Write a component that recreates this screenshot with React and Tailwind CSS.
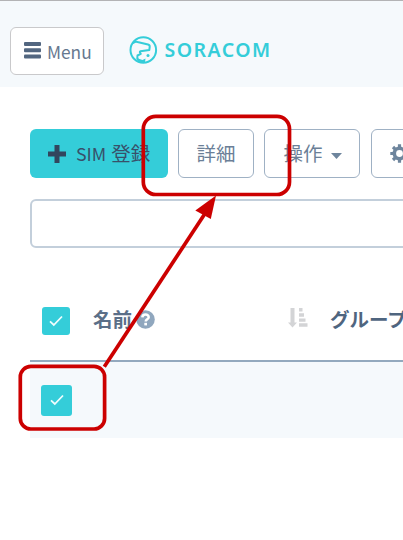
const Check = ({ className }) => (
  <span className={`flex shrink-0 items-center justify-center rounded-[3px] bg-[#34cdd9] ${className}`}>
    <svg width="14" height="12" viewBox="0 0 14 12" fill="none" stroke="#f0fcfd" strokeWidth="1.8">
      <path d="M1 6.4 4.8 10 13 1.5" />
    </svg>
  </span>
);

const Logo = () => (
  <svg className="shrink-0" width="144" height="30" viewBox="0 0 144 30" fill="#34cdd9">
    <g fill="none" stroke="#34cdd9" strokeWidth="2" strokeLinejoin="round">
      <circle cx="14.3" cy="15" r="12.8" />
      <path d="M4 8.500Q6 6 8.500 7L19 9.500Q21 10 20.700 12L20.300 15 11.500 16.300Q10 16.800 11.800 18.800L8.500 20.500 8.300 23.500 11 26.500" />
    </g>
    <path d="M9 23.500 13.500 25 16.500 23.500 16 27.500 11.500 27.500Z" />
    <circle cx="19" cy="20.5" r="1.5" />
    <text x="35.6" y="21.9" fontSize="19.5" fontWeight="600" textLength="105.5" lengthAdjust="spacing" fontFamily="'Noto Sans', sans-serif">SORACOM</text>
  </svg>
);

const Gear = () => (
  <svg width="19" height="19" viewBox="0 0 19 19" fill="none" stroke="#6e859d">
    <circle cx="9.5" cy="9.5" r="5.2" strokeWidth="3.6" />
    <path d="M9.5 0.3v3M9.5 15.7v3M.3 9.5h3M15.7 9.5h3M3 3l2.1 2.1M13.9 13.9 16 16M16 3l-2.1 2.1M5.1 13.9 3 16" strokeWidth="3.2" />
  </svg>
);

const Annotations = () => (
  <svg className="pointer-events-none absolute left-0 top-0" width="403" height="540" fill="none" stroke="#cc0000" strokeWidth="3.7">
    <rect x="143.3" y="116.3" width="146.2" height="78.2" rx="12.5" />
    <rect x="20.3" y="366.4" width="84.3" height="62.6" rx="10.5" />
    <path d="M104.3 366.8 206 212" />
    <path d="M216 195.5 195.3 210.5 210.8 219Z" fill="#cc0000" stroke="none" />
  </svg>
);

export default function App() {
  return (
    <div className="relative h-[540px] w-[403px] overflow-hidden bg-white font-['Noto_Sans_CJK_JP',sans-serif] text-[19.5px] leading-none text-[#6b7f97]">
      <header className="flex h-[87px] items-start border-t border-[#b3b3b5] bg-[#f5f9fc] pl-[10px] pt-[26px]">
        <button className="flex h-[48px] w-[94px] items-center rounded-[6px] border border-[#c9c9cb] bg-white pl-[12.5px] text-[17.3px] text-[#66788f]">
          <svg className="mb-[2px]" width="17" height="17" viewBox="0 0 17 17" fill="#526680">
            <rect width="17" height="4" rx="1" />
            <rect y="6.3" width="17" height="4" rx="1" />
            <rect y="12.6" width="17" height="4" rx="1" />
          </svg>
          <span className="ml-[6.5px] pt-[2px]">Menu</span>
        </button>
        <div className="ml-[25px] mt-[8px]"><Logo /></div>
      </header>

      <main className="pl-[30px] pt-[42px]">
        <div className="flex w-[450px] gap-[10px]">
          <button className="flex h-[49px] w-[138px] shrink-0 items-center rounded-[6px] bg-[#34cdd9] pl-[18px] text-[#38506a]">
            <svg width="18" height="18" viewBox="0 0 18 18" fill="#32465e">
              <path d="M6.5 0h5v6.5H18v5h-6.5V18h-5v-6.5H0v-5h6.5z" />
            </svg>
            <span className="mb-[2px] ml-[10px] flex items-baseline gap-[5px]"><span className="text-[17.8px]">SIM</span><span>登録</span></span>
          </button>
          <button className="h-[49px] w-[76px] shrink-0 rounded-[6px] border border-[#9fb1c4] bg-white pb-[2px]">詳細</button>
          <button className="flex h-[49px] w-[96px] shrink-0 items-center rounded-[6px] border border-[#9fb1c4] bg-white pl-[18.5px]">
            <span className="mb-[2px]">操作</span>
            <svg className="ml-[8px] mt-[4px]" width="11" height="6" viewBox="0 0 11 6" fill="#6e859d"><path d="M0 0h11L5.5 6z" /></svg>
          </button>
          <button className="ml-[1px] flex h-[49px] w-[80px] shrink-0 items-center rounded-[6px] border border-[#9fb1c4] bg-white pl-[18px]">
            <Gear />
          </button>
        </div>

        <div className="mt-[21px] h-[49px] w-[400px] rounded-[6px] border-2 border-[#c3cfdb] bg-white" />

        <div className="flex h-[114px] items-start border-b-2 border-[#93a9be] pl-[12px] pt-[59px]">
          <Check className="h-[28px] w-[28px]" />
          <div className="ml-[23px] flex w-[195px] shrink-0 items-center pt-[2px] font-bold text-[#5b6f88]">
            <span className="mb-[1px]">名前</span>
            <svg className="ml-[4px]" width="19" height="19" viewBox="0 0 19 19">
              <circle cx="9.5" cy="9.5" r="9.3" fill="#90a7be" />
              <path d="M6.3 7.3C6.6 3.7 12.7 3.7 12.7 7.2 12.7 9.3 9.7 9.3 9.7 11.5" fill="none" stroke="#fff" strokeWidth="2.5" />
              <rect x="8.3" y="12.8" width="2.7" height="2.6" fill="#fff" />
            </svg>
          </div>
          <svg className="mt-[1px] shrink-0" width="20" height="20" viewBox="0 0 20 20" fill="#d3d4d6">
            <path d="M2.5 0h4v14.5H9L4.5 19.5 0 14.5h2.5zM11 0h3.5v3.5H11zM11 5.2h5v3.5h-5zM11 10.4h6.5v3.3H11zM11 15.3h8.500v3.400H11z" />
          </svg>
          <span className="ml-[22px] shrink-0 whitespace-nowrap pt-[2px] font-bold text-[#4f657f]">グループ</span>
        </div>

        <div className="flex h-[76px] items-center bg-[#f5f9fc] pl-[11px]">
          <Check className="h-[31px] w-[31px]" />
        </div>
      </main>
      <Annotations />
    </div>
  );
}
